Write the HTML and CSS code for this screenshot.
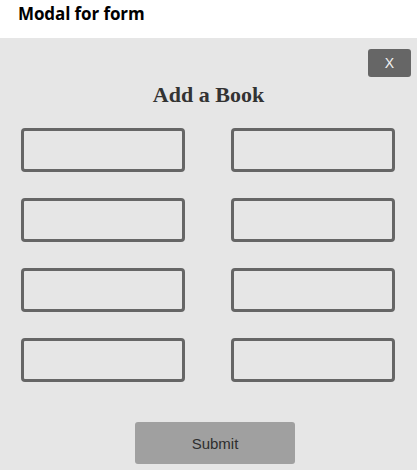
FILE: index.html
```html
<!DOCTYPE html>
<html>
<head>
<meta charset="utf-8">
<link rel="stylesheet" href="styles.css">
</head>
<body>
<header class="page-title">Modal for form</header>
<section class="modal">
  <div class="modal-top">
    <button class="close-btn" type="button">X</button>
  </div>
  <h2 class="modal-title">Add a Book</h2>
  <form class="book-form">
    <div class="fields">
      <input class="field" type="text">
      <input class="field" type="text">
      <input class="field" type="text">
      <input class="field" type="text">
      <input class="field" type="text">
      <input class="field" type="text">
      <input class="field" type="text">
      <input class="field" type="text">
    </div>
    <div class="actions">
      <button class="submit-btn" type="button">Submit</button>
    </div>
  </form>
</section>
</body>
</html>
```
FILE: styles.css
```css
html, body {
  margin: 0;
  padding: 0;
  background: #ffffff;
  height: 100%;
}
body {
  display: flex;
  flex-direction: column;
  overflow: hidden;
}
.page-title {
  font-family: "Open Sans", "Liberation Sans", sans-serif;
  font-weight: 700;
  font-size: 17px;
  line-height: 28px;
  height: 38px;
  padding-left: 18px;
  color: #000;
  box-sizing: border-box;
  letter-spacing: -0.1px;
}
.modal {
  flex: 1;
  background: #e6e6e6;
  display: flex;
  flex-direction: column;
}
.modal-top {
  display: flex;
  justify-content: flex-end;
  padding: 11px 6px 0 0;
}
.close-btn {
  width: 43px;
  height: 28px;
  background: #666666;
  border: none;
  border-radius: 3px;
  color: #f2f2f2;
  font-family: "Liberation Sans", sans-serif;
  font-size: 14px;
  padding: 0;
}
.modal-title {
  margin: 0;
  text-align: center;
  font-family: "Liberation Serif", serif;
  font-weight: 700;
  font-size: 22px;
  color: #333333;
  line-height: 26px;
  margin-top: 5px;
}
.book-form {
  display: flex;
  flex-direction: column;
}
.fields {
  display: grid;
  grid-template-columns: 164px 164px;
  column-gap: 46px;
  row-gap: 26px;
  padding: 20px 0 0 21px;
}
.field {
  box-sizing: border-box;
  width: 164px;
  height: 44px;
  border: 3px solid #666666;
  border-radius: 4px;
  background: #e6e6e6;
  margin: 0;
}
.actions {
  display: flex;
  justify-content: center;
  padding-top: 40px;
  padding-left: 13px;
}
.submit-btn {
  width: 160px;
  height: 42px;
  background: #a0a0a0;
  border: none;
  border-radius: 3px;
  font-family: "Liberation Sans", sans-serif;
  font-size: 15px;
  color: #2e2e2e;
  padding: 0;
}
```
